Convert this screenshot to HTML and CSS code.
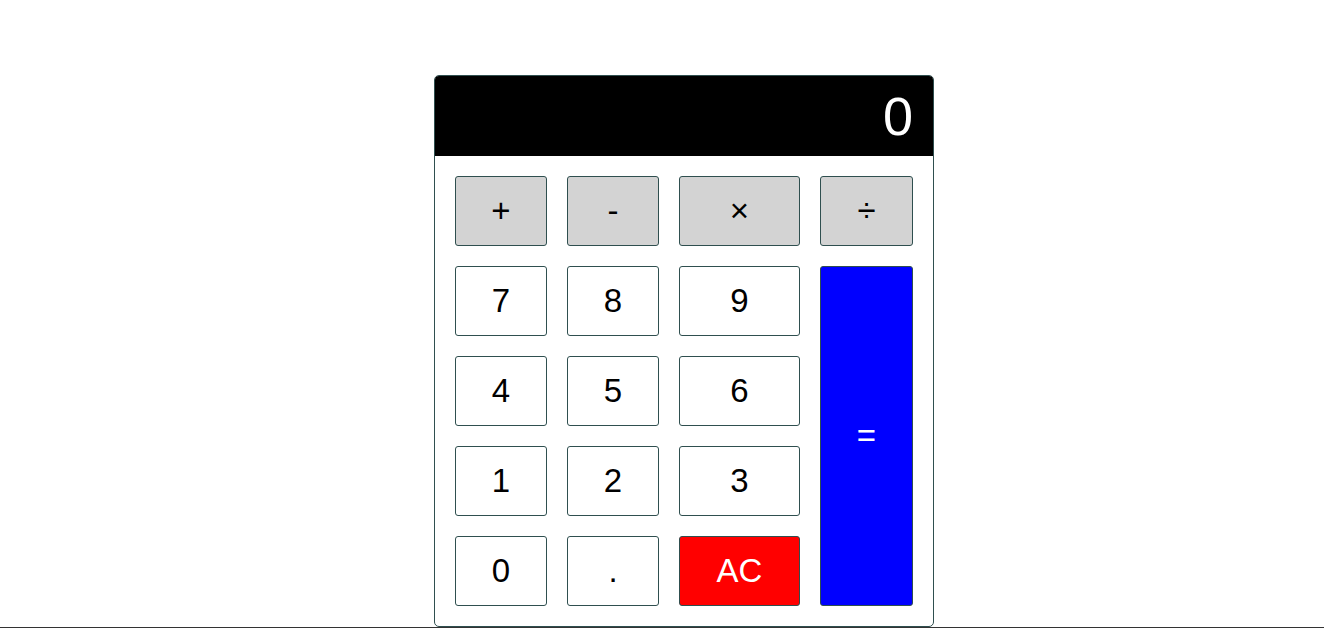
FILE: index.html
```html
<!DOCTYPE html>
<html lang="en">
<head>
<meta charset="utf-8">
<title>Calculator</title>
<link rel="stylesheet" href="styles.css">
</head>
<body>
<main class="page">
  <div class="calculator">
    <div class="display">0</div>
    <div class="keys">
      <button class="key op">+</button>
      <button class="key op">-</button>
      <button class="key op">×</button>
      <button class="key op">÷</button>
      <button class="key">7</button>
      <button class="key">8</button>
      <button class="key">9</button>
      <button class="key equals">=</button>
      <button class="key">4</button>
      <button class="key">5</button>
      <button class="key">6</button>
      <button class="key">1</button>
      <button class="key">2</button>
      <button class="key">3</button>
      <button class="key">0</button>
      <button class="key">.</button>
      <button class="key clear">AC</button>
    </div>
  </div>
</main>
<div class="baseline"></div>
</body>
</html>
```
FILE: styles.css
```css
* { box-sizing: border-box; }
html, body {
  margin: 0;
  padding: 0;
  background: #ffffff;
  font-family: "Liberation Sans", Arial, sans-serif;
}
.page {
  display: flex;
  padding: 75px 0 0 434px;
}
.calculator {
  width: 500px;
  border: 1px solid #2f4f4f;
  border-radius: 5px;
  overflow: hidden;
  background: #fff;
}
.display {
  height: 80px;
  background: #000;
  color: #fff;
  font-size: 54px;
  display: flex;
  align-items: center;
  justify-content: flex-end;
  padding-right: 20px;
}
.keys {
  display: grid;
  grid-template-columns: 92px 92px 121px 93px;
  grid-template-rows: repeat(5, 70px);
  gap: 20px;
  padding: 20px;
}
.key {
  font-family: "Liberation Sans", Arial, sans-serif;
  font-size: 33px;
  color: #000;
  background: #fff;
  border: 1px solid #2f4f4f;
  border-radius: 3px;
  padding: 0;
  margin: 0;
  display: flex;
  align-items: center;
  justify-content: center;
}
.op { background: #d3d3d3; }
.equals {
  grid-column: 4;
  grid-row: 2 / span 4;
  background: #0000ff;
  color: #fff;
}
.clear {
  background: #ff0000;
  color: #fff;
}
.baseline {
  height: 1px;
  background: #333333;
}
```
